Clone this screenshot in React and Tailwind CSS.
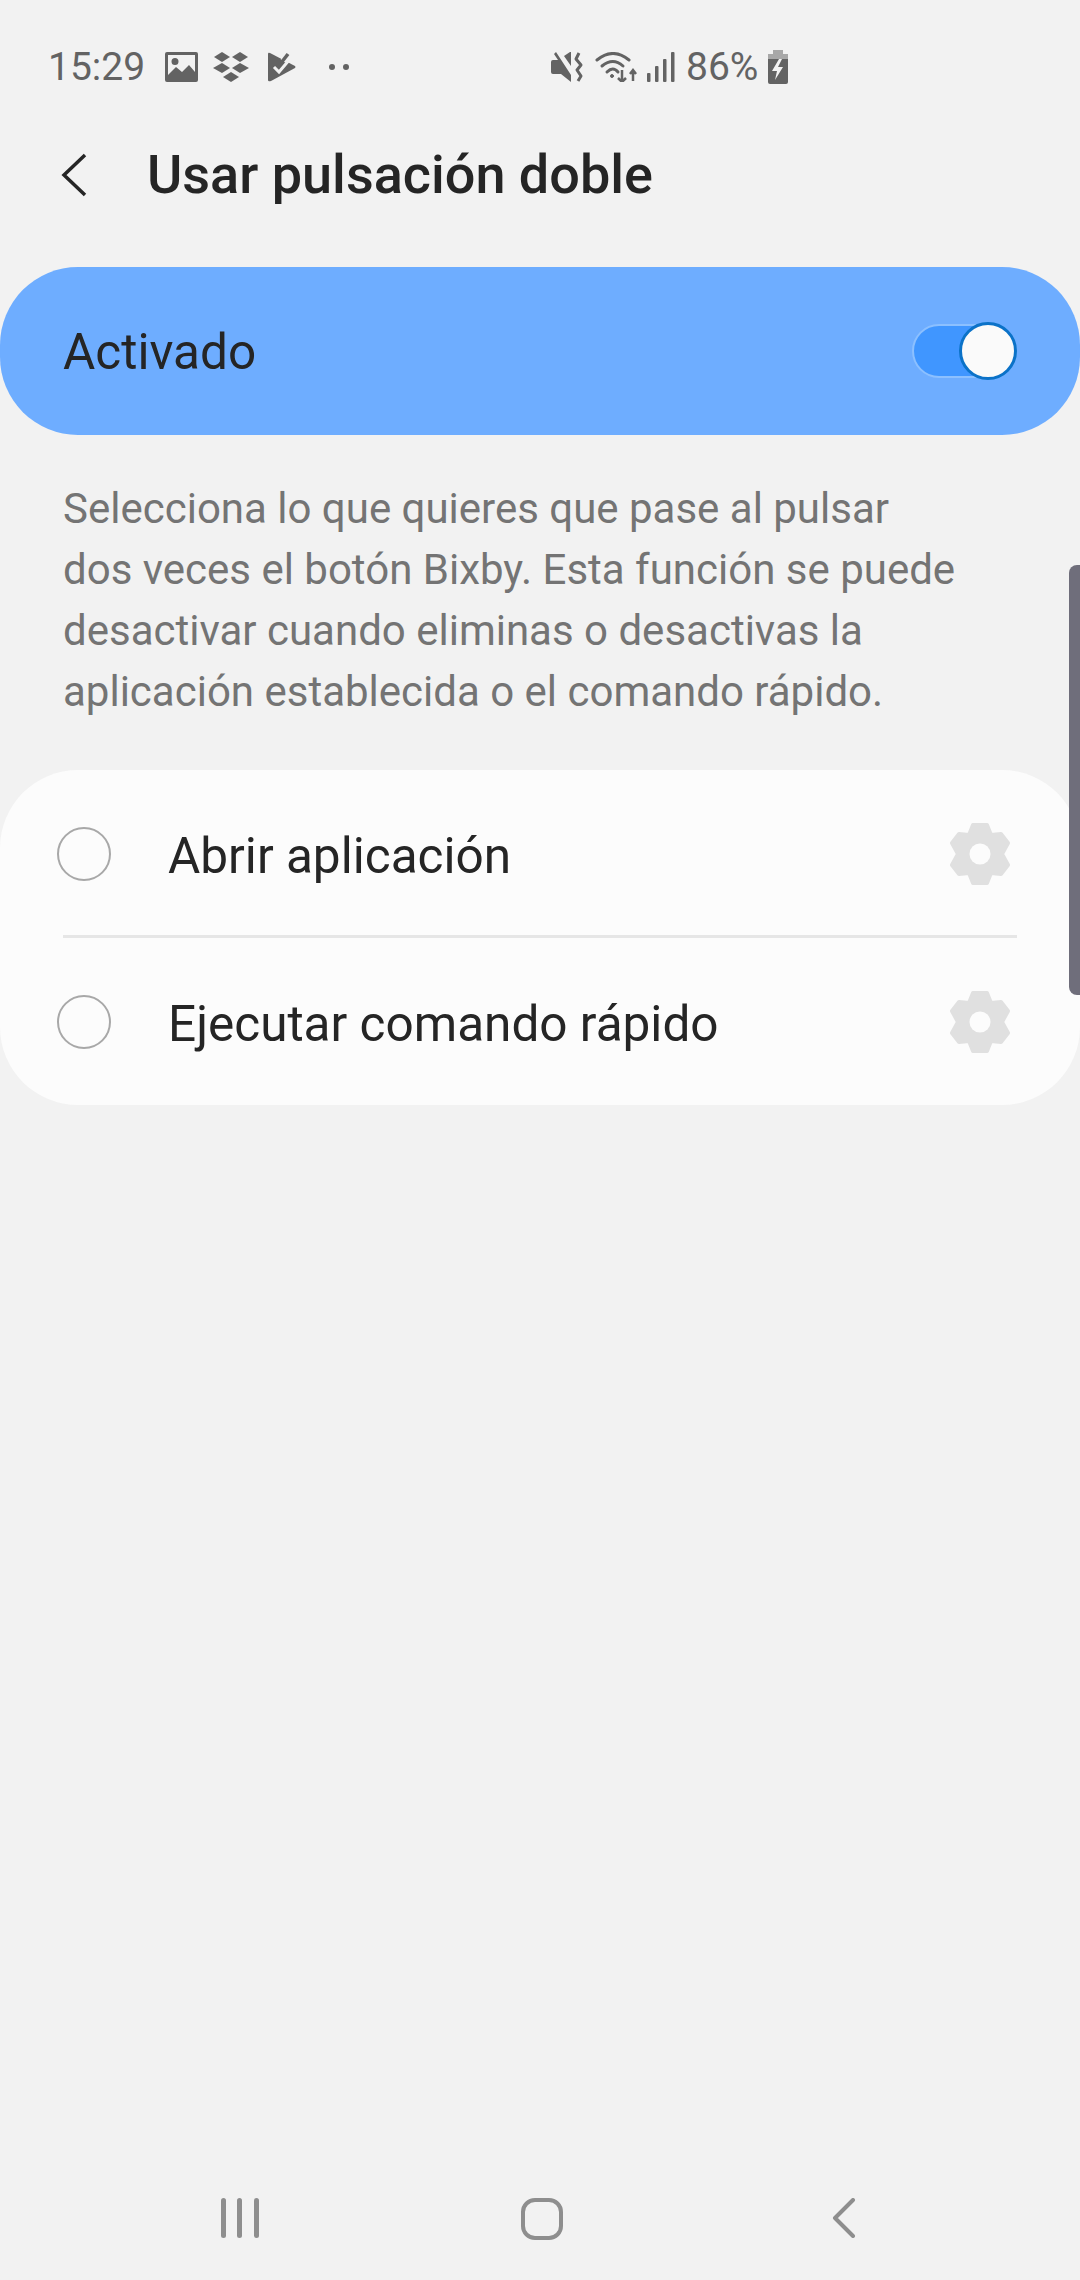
import React from 'react';

function ImageIcon() {
  return (
    <svg width="33" height="30" viewBox="0 0 33 30">
      <path fillRule="evenodd" fill="#636363" d="M2 0H31a2 2 0 0 1 2 2V28a2 2 0 0 1-2 2H2a2 2 0 0 1-2-2V2a2 2 0 0 1 2-2ZM3 3V23L11 15 17 20 24 13 30 20V3ZM10 6a3.5 3.5 0 1 1 0 7 3.5 3.5 0 0 1 0-7Z" />
    </svg>
  );
}

function DropboxIcon() {
  return (
    <svg width="36" height="30" viewBox="0 0 36 30" fill="#636363">
      <path d="M9 0 17 5 9 10 1 5Z" />
      <path d="M27 0 35 5 27 10 19 5Z" />
      <path d="M9 11 17 16 9 21 0 16Z" />
      <path d="M27 11 36 16 27 21 19 16Z" />
      <path d="M18 20 26 25 18 30 10 25Z" />
    </svg>
  );
}

function FlagIcon() {
  return (
    <svg width="28" height="30" viewBox="0 0 28 30">
      <path fill="#636363" d="M0 2Q0 0 2 1L27 14Q28 15 27 16L3 29Q0 30 0 28Z" />
      <path fill="none" stroke="#f2f2f2" strokeWidth="6" d="M15 9 22 0" />
      <path fill="none" stroke="#f2f2f2" strokeWidth="3" d="M6 15 11 20 22 7" />
      <path fill="none" stroke="#636363" strokeWidth="3.5" d="M13 11 20 2" />
    </svg>
  );
}

function MuteIcon() {
  return (
    <svg width="32" height="32" viewBox="0 0 32 32">
      <path fill="#636363" d="M0 11Q0 9 2 9H7L3 3 5 1 20 24V31L10 23H2Q0 23 0 21ZM13 5 19 1 20 1V15Z" />
      <path fill="none" stroke="#636363" strokeWidth="3" strokeLinejoin="round" d="M28 2 25 8 30 14 26 19 30 25 27 30" />
    </svg>
  );
}

function WifiIcon() {
  return (
    <svg width="43" height="30" viewBox="0 0 43 30" fill="none" stroke="#636363" strokeWidth="3" strokeLinecap="round">
      <path d="M2 8Q18-5 34 8" />
      <path d="M7 14Q18 5 28 14" />
      <path d="M12 20Q18 14 23 20" />
      <circle cx="17" cy="24" r="1.5" fill="#636363" strokeWidth="1" />
      <path strokeWidth="2.5" d="M27 18V30M23 26 27 30 31 26" strokeLinecap="butt" />
      <path strokeWidth="2.5" d="M38 29V18M35 22 38 18 41 22" strokeLinecap="butt" />
    </svg>
  );
}

function SignalIcon() {
  return (
    <svg width="28" height="30" viewBox="0 0 28 30" fill="#636363">
      <rect x="0" y="21" width="3.5" height="9" rx="1" />
      <rect x="8" y="14" width="3.5" height="16" rx="1" />
      <rect x="16" y="7" width="3.5" height="23" rx="1" />
      <rect x="24" y="0" width="3.5" height="30" rx="1" />
    </svg>
  );
}

function BatteryIcon() {
  return (
    <svg width="22" height="34" viewBox="0 0 22 34">
      <path fill="#a8a8a8" d="M6 0H16V4H21V12H1V4H6Z" />
      <path fill="#636363" d="M1 9H21V32Q21 34 19 34H3Q1 34 1 32Z" />
      <path fill="#f2f2f2" d="M12 9 5 21H10L8 30 16 17H11L15 9Z" />
    </svg>
  );
}

function GearIcon() {
  return (
    <svg width="60" height="64" viewBox="0 0 60 64">
      <path
        fill="#e0e0e0"
        stroke="#e0e0e0"
        strokeWidth="4"
        strokeLinejoin="round"
        fillRule="evenodd"
        d="M23 3H37L41 13 51 12 58 21 52 32 58 43 51 52 41 51 37 61H23L19 51 9 52 2 43 8 32 2 21 9 12 19 13Z"
      />
      <circle cx="30" cy="32" r="10.5" fill="#fcfcfc" />
    </svg>
  );
}

function Toggle() {
  return (
    <div className="relative flex h-[58px] w-[105px] items-center">
      <div className="h-[54px] w-[98px] rounded-full border-2 border-[#8cc0ff] bg-[#4096ff]" />
      <div className="absolute right-0 top-0 h-[58px] w-[58px] rounded-full border-[3px] border-[#0b72c8] bg-[#fafafa]" />
    </div>
  );
}

function OptionRow({ label, className }) {
  return (
    <div className={`flex items-center pl-[57px] pr-[70px] ${className}`}>
      <div className="h-[54px] w-[54px] shrink-0 rounded-full border-2 border-[#a8a8a8]" />
      <span className="ml-[57px] flex-1 pt-[4px] text-[49.5px] text-[#252525]">{label}</span>
      <GearIcon />
    </div>
  );
}

export default function App() {
  return (
    <div className="relative flex h-[2280px] w-[1080px] flex-col overflow-hidden bg-[#f2f2f2] font-['Roboto',sans-serif]">
      {/* status bar */}
      <div className="flex h-[134px] items-center pl-[48px]">
        <span className="w-[117px] text-[39px] leading-none text-[#636363]">15:29</span>
        <ImageIcon />
        <div className="ml-[15px]"><DropboxIcon /></div>
        <div className="ml-[19px]"><FlagIcon /></div>
        <div className="ml-[33px] flex gap-[8px]">
          <div className="h-[6px] w-[6px] rounded-full bg-[#636363]" />
          <div className="h-[6px] w-[6px] rounded-full bg-[#636363]" />
        </div>
        <div className="ml-[202px]"><MuteIcon /></div>
        <div className="ml-[12px]"><WifiIcon /></div>
        <div className="ml-[9px]"><SignalIcon /></div>
        <span className="ml-[11px] w-[72px] text-[39px] leading-none text-[#636363]">86%</span>
        <div className="ml-[9px]"><BatteryIcon /></div>
      </div>

      {/* header */}
      <div className="flex h-[82px] items-center pl-[61px]">
        <svg width="26" height="44" viewBox="0 0 26 44" fill="none" stroke="#252525" strokeWidth="3.5">
          <path d="M24 2 3 22 24 42" />
        </svg>
        <h1 className="ml-[60px] pb-[2px] text-[54px] font-medium text-[#252525]">Usar pulsación doble</h1>
      </div>

      <div className="mt-[51px] flex h-[168px] items-center justify-between rounded-[78px] bg-[#6eadff] px-[63px]">
        <span className="pt-[2px] text-[49.5px] text-[#252525]">Activado</span>
        <Toggle />
      </div>

      <p className="mx-[63px] mb-[48px] mt-[43px] whitespace-nowrap text-[42px] leading-[61px] text-[#747474]">
        Selecciona lo que quieres que pase al pulsar
        <br />
        dos veces el botón Bixby. Esta función se puede
        <br />
        desactivar cuando eliminas o desactivas la
        <br />
        aplicación establecida o el comando rápido.
      </p>

      <div className="rounded-[78px] bg-[#fcfcfc]">
        <OptionRow label="Abrir aplicación" className="h-[165px] pt-[3px]" />
        <div className="mx-[63px] h-[3px] bg-[#e6e6e6]" />
        <OptionRow label="Ejecutar comando rápido" className="h-[167px] pt-[1px]" />
      </div>

      {/* nav bar */}
      <div className="mt-auto flex h-[82px] items-start pl-[221px]">
        <svg width="38" height="40" viewBox="0 0 38 40" fill="#8e8e8e">
          <rect x="0" y="0" width="5" height="40" rx="2.5" />
          <rect x="16" y="0" width="5" height="40" rx="2.5" />
          <rect x="33" y="0" width="5" height="40" rx="2.5" />
        </svg>
        <div className="ml-[262px] h-[42px] w-[42px] rounded-[14px] border-[4px] border-[#8e8e8e]" />
        <svg className="ml-[269px]" width="24" height="40" viewBox="0 0 24 40" fill="none" stroke="#8e8e8e" strokeWidth="4" strokeLinecap="round" strokeLinejoin="round">
          <path d="M21 2 3 20 21 38" />
        </svg>
      </div>

      {/* scroll indicator */}
      <div className="absolute right-0 top-[565px] h-[430px] w-[11px] rounded-l-[8px] bg-[#6f6e7b]" />
    </div>
  );
}
